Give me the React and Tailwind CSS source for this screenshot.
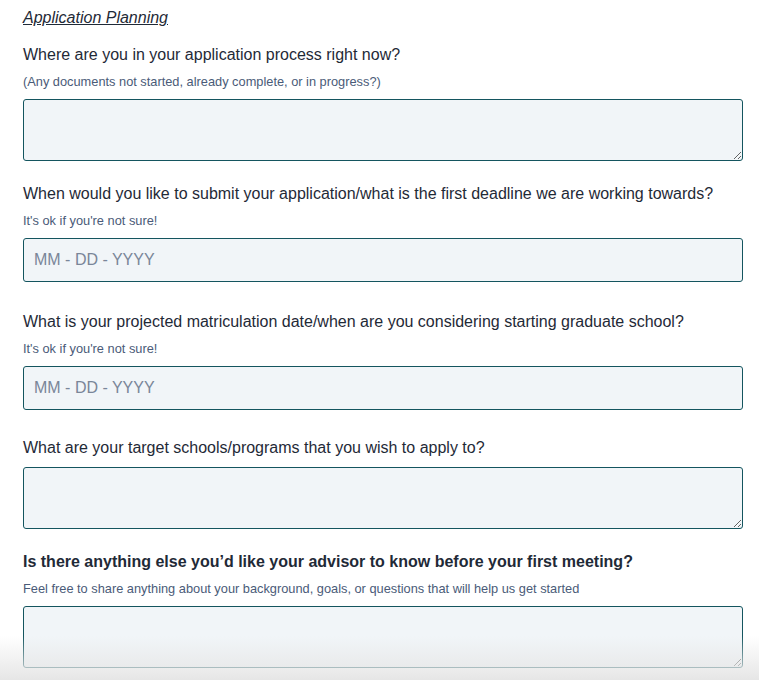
const font = { fontFamily: '"Liberation Sans", Arial, sans-serif' };

const Label = ({ children, bold }) => (
  <p
    className={`text-[16px] leading-6 text-[#1f2a37] mb-[7px] ${
      bold ? "font-bold" : ""
    }`}
  >
    {children}
  </p>
);

const Hint = ({ children }) => (
  <p className="text-[12.8px] leading-4 text-[#4a5b78] mb-[9px]">{children}</p>
);

const Area = () => (
  <textarea
    className="block w-full h-[62px] bg-[#f1f5f8] border border-[#14555f] rounded-[3px] px-2 py-1 text-[16px] text-[#1f2a37] outline-none"
    style={font}
  />
);

const DateInput = () => (
  <input
    type="text"
    placeholder="MM - DD - YYYY"
    className="block w-full h-[44px] bg-[#f1f5f8] border border-[#14555f] rounded-[3px] px-[10px] text-[16px] text-[#1f2a37] placeholder:text-[#7a8699] outline-none"
    style={font}
  />
);

export default function App() {
  return (
    <div className="relative h-[680px] overflow-hidden bg-white" style={font}>
      <div className="pl-[23px] pr-[16px] pt-[8px] w-[759px]">
        <h2 className="text-[16px] leading-5 italic underline text-[#1f2a37] mb-[15px]">
          Application Planning
        </h2>

        <div className="mb-[21px]">
          <Label>Where are you in your application process right now?</Label>
          <Hint>(Any documents not started, already complete, or in progress?)</Hint>
          <Area />
        </div>

        <div className="mb-[28px]">
          <Label>
            When would you like to submit your application/what is the first
            deadline we are working towards?
          </Label>
          <Hint>It's ok if you're not sure!</Hint>
          <DateInput />
        </div>

        <div className="mb-[26px]">
          <Label>
            What is your projected matriculation date/when are you considering
            starting graduate school?
          </Label>
          <Hint>It's ok if you're not sure!</Hint>
          <DateInput />
        </div>

        <div className="mb-[21px]">
          <Label>What are your target schools/programs that you wish to apply to?</Label>
          <Area />
        </div>

        <div>
          <Label bold>
            Is there anything else you’d like your advisor to know before your
            first meeting?
          </Label>
          <Hint>
            Feel free to share anything about your background, goals, or
            questions that will help us get started
          </Hint>
          <Area />
        </div>
      </div>
      <div className="pointer-events-none absolute bottom-0 left-0 right-0 h-[44px] bg-gradient-to-b from-transparent to-[#e6e6e6]" />
    </div>
  );
}
